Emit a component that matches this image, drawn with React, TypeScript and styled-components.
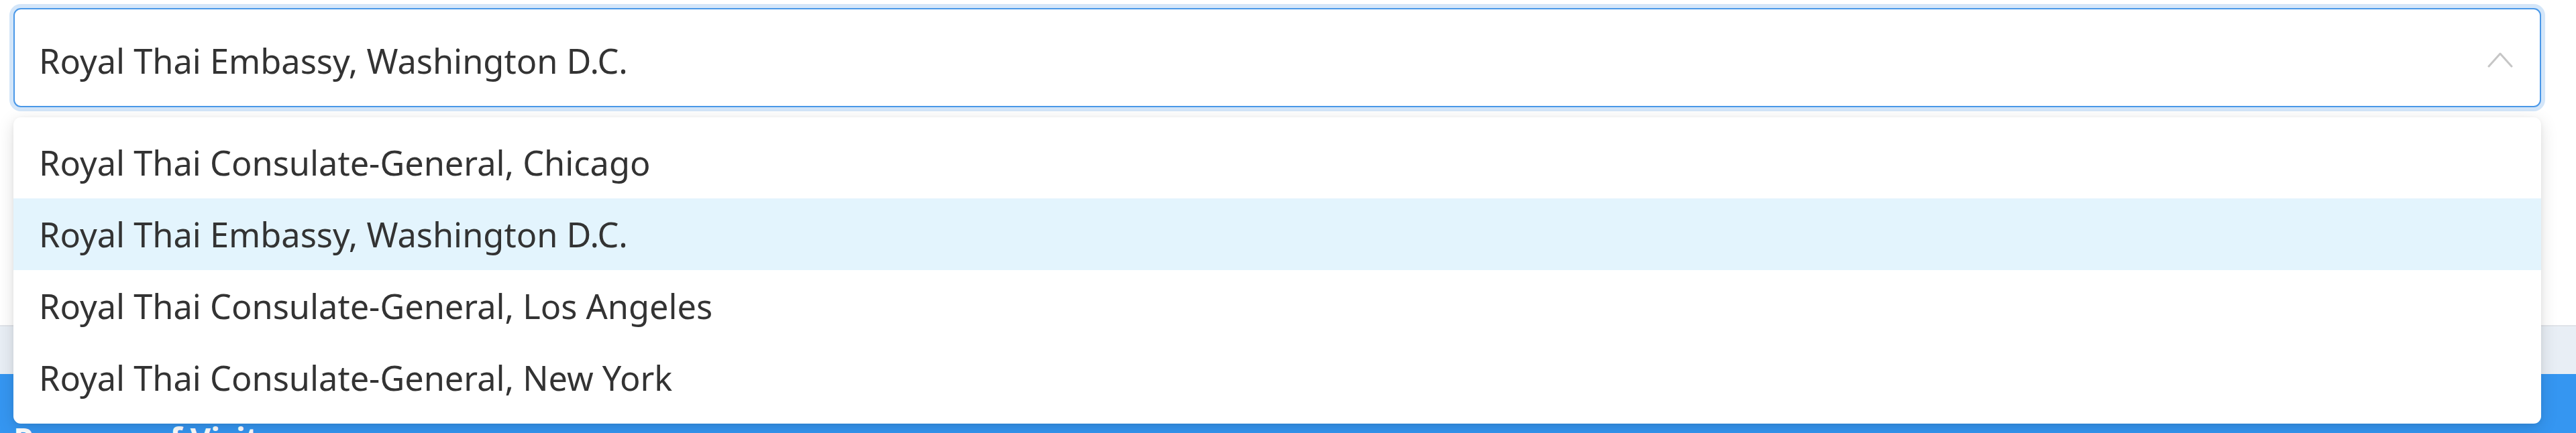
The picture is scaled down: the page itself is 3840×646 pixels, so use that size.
import React from "react";
import styled, { createGlobalStyle } from "styled-components";

const GlobalStyle = createGlobalStyle`
  html, body {
    margin: 0;
    padding: 0;
    background: #ffffff;
    overflow: hidden;
  }
  body {
    font-family: "Noto Sans", "Open Sans", sans-serif;
  }
  * { box-sizing: border-box; }
`;

const Page = styled.div`
  display: flex;
  flex-direction: column;
  width: 3840px;
  height: 646px;
  overflow: hidden;
`;

const CardBody = styled.div`
  flex: none;
  height: 485px;
  padding: 12px 52px 0 20px;
  background: #ffffff;
`;

const Field = styled.div`
  position: relative;
  width: 3768px;
`;

const SelectBox = styled.div`
  display: flex;
  align-items: center;
  height: 148px;
  padding: 9px 40px 0 36px;
  border: 2px solid #4a98e8;
  border-radius: 11px;
  background: #ffffff;
  box-shadow: 0 0 0 6px rgba(74, 152, 232, 0.24);
`;

const Value = styled.span`
  flex: 1;
  font-size: 50.5px;
  color: #333333;
  white-space: nowrap;
`;

const Chevron = styled.svg`
  width: 38px;
  height: 26px;
  flex: none;
  margin-top: -4px;
`;

const Menu = styled.ul`
  position: absolute;
  top: calc(100% + 15px);
  left: 0;
  right: 0;
  margin: 0;
  padding: 14px 0 15px;
  list-style: none;
  background: #ffffff;
  border-radius: 11px;
  box-shadow: 0 6px 26px rgba(0, 0, 0, 0.13), 0 2px 6px rgba(0, 0, 0, 0.06);
  z-index: 10;
`;

const Option = styled.li<{ $active?: boolean }>`
  display: flex;
  align-items: center;
  height: 107px;
  padding-left: 38px;
  font-size: 50.5px;
  color: #333333;
  white-space: nowrap;
  background: ${(p) => (p.$active ? "#e3f4fd" : "transparent")};
`;

const GrayBand = styled.div`
  flex: none;
  height: 73px;
  background: #e8eef5;
  border-top: 2px solid #dfe3e8;
`;

const BlueBar = styled.div`
  flex: 1 0 auto;
  padding: 64px 20px 0 20px;
  background: #3596f1;
`;

const Heading = styled.h2`
  margin: 0;
  font-size: 47px;
  font-weight: 700;
  color: #ffffff;
  white-space: nowrap;
`;

const options = [
  "Royal Thai Consulate-General, Chicago",
  "Royal Thai Embassy, Washington D.C.",
  "Royal Thai Consulate-General, Los Angeles",
  "Royal Thai Consulate-General, New York",
];

export default function App() {
  const selected = "Royal Thai Embassy, Washington D.C.";
  return (
    <Page>
      <GlobalStyle />
      <CardBody>
        <Field>
          <SelectBox>
            <Value>{selected}</Value>
            <Chevron viewBox="0 0 38 26">
              <polyline
                points="2,23 19,4 36,23"
                fill="none"
                stroke="#c6c6c6"
                strokeWidth="3"
                strokeLinecap="round"
                strokeLinejoin="round"
              />
            </Chevron>
          </SelectBox>
          <Menu>
            {options.map((o) => (
              <Option key={o} $active={o === selected}>
                {o}
              </Option>
            ))}
          </Menu>
        </Field>
      </CardBody>
      <GrayBand />
      <BlueBar>
        <Heading>Purpose of Visit</Heading>
      </BlueBar>
    </Page>
  );
}
